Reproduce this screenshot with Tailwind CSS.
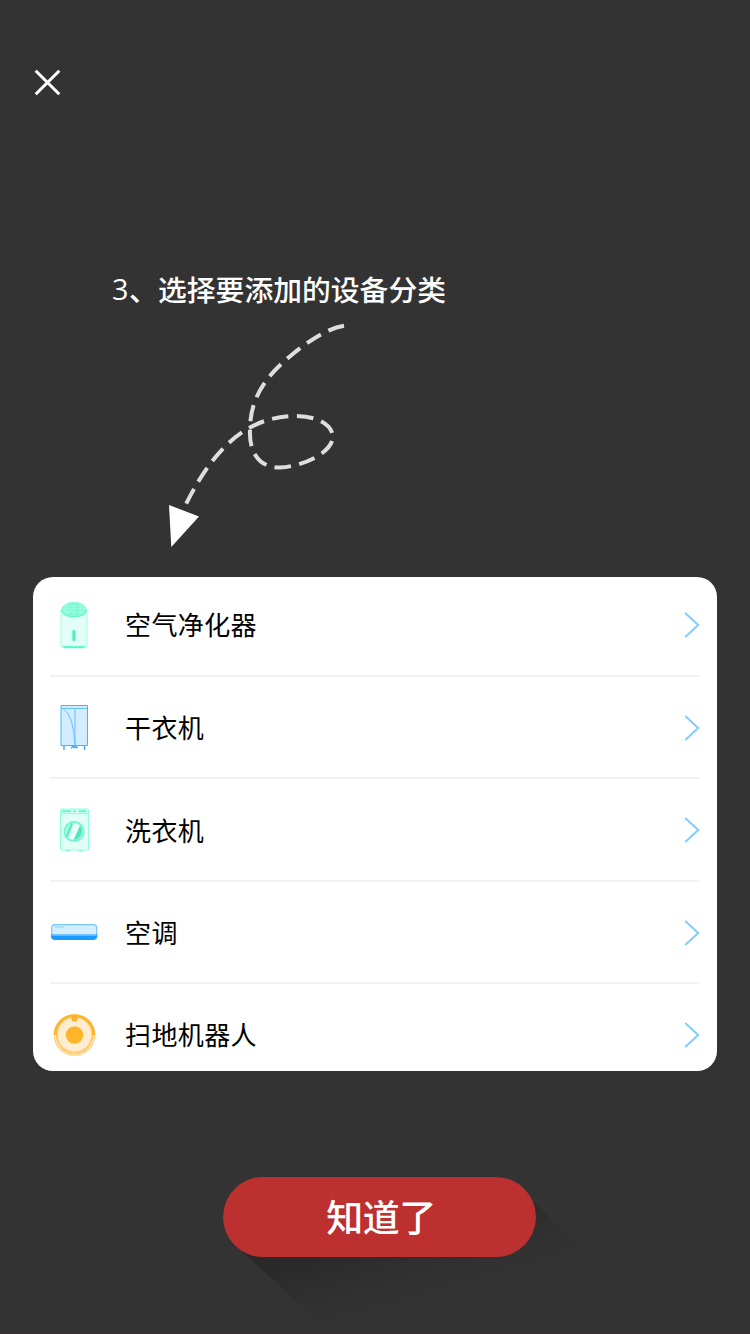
<!DOCTYPE html>
<html lang="zh-CN">
<head>
<meta charset="utf-8">
<title>添加设备</title>
<script src="https://cdn.jsdelivr.net/npm/@tailwindcss/browser@4"></script>
</head>
<body class="bg-[#333333]">
<main class="relative flex h-[1334px] w-[750px] flex-col overflow-hidden border-b border-[#3a3035] bg-[#333333] font-['Noto_Sans_CJK_SC',sans-serif]">
  <header class="pt-[68px] pl-[33px]">
    <svg class="block" width="30" height="30" viewBox="0 0 30 30" fill="none" stroke="#fff" stroke-width="3"><path d="M2.7 2.7 26.3 26.3M26.3 2.7 2.7 26.3"/></svg>
  </header>
  <h1 class="mt-[169px] mb-px flex h-[44px] items-center pl-[112px] text-[28.8px] leading-[44px] font-medium whitespace-nowrap text-white"><span class="w-[17px] font-['Open_Sans',sans-serif] font-medium">3</span><span class="w-[29px]">、</span><span>选择要添加的设备分类</span></h1>
  <svg class="ml-[150px] block shrink-0" width="210" height="265" viewBox="150 312 210 265" fill="none">
    <path d="M344 325.7C328 328 308 341 288 358C262 380 250 402 250 430C249 452 259 468 280 467.5C305 466 333 452 333 436C331 422 312 415 292 416C245 418 213 450 186 504" stroke="#dedede" stroke-width="4" stroke-dasharray="16.5 8.4"/>
    <path d="M169 505 199 516.5 171.3 547Z" fill="#fff"/>
  </svg>
  <section class="mx-[33px] h-[494px] shrink-0 overflow-hidden rounded-[20px] bg-white">
    <ul class="-mt-[2px] mr-[17px] ml-[17px] text-[26px] tracking-[0.4px] text-black">
      <li class="flex h-[102px] items-center border-b-2 border-[#f2f2f2]">
        <svg class="mr-[27px] block" width="48" height="48" viewBox="0 0 48 48"><path d="M11 9v36.5h26V9" fill="#e2fff7" stroke="#9effde"/><ellipse cx="24" cy="8.5" rx="12.5" ry="7.5" fill="#7cf9d3"/><path d="M13 5h22M11.5 8h25M12 11h24M24 1v15M19 1q-4 7 1 15M29 1q4 7-1 15M15 3q-2 6 2 11M33 3q2 6-2 11" fill="none" stroke="#b5ffe8" stroke-width=".6"/><path d="M11.5 9c0 9 25 9 25 0" fill="none" stroke="#5cf3c4"/><rect x="22.4" y="29" width="3" height="11" rx="1" fill="#4deebb"/><path d="M13.5 46.3h21" stroke="#4ffac6" stroke-width="2"/></svg>
        <span class="flex-1 pb-[3px]">空气净化器</span>
        <svg class="block" width="16" height="26" viewBox="0 0 16 26" fill="none" stroke="#82ccff" stroke-width="2"><path d="M1.2 1 14.2 13 1.2 25"/></svg>
      </li>
      <li class="flex h-[102px] items-center border-b-2 border-[#f2f2f2]">
        <svg class="mr-[27px] block" width="48" height="48" viewBox="0 0 48 48" fill="none"><path d="M11 2.500h26.500v40H11Z" fill="#d2edff" stroke="#49b2ff"/><path d="M11 5.500h26M25 6v37" stroke="#66bfff"/><path d="M13.5 6q10 6 11.500 37" stroke="#66bfff"/><path d="M14 43v4M34.500 43v4" stroke="#35a5ff" stroke-width="1.4"/><path d="M21 45.300l2-2 1.300 1.500 1.300-1.500 2 2" stroke="#35a5ff" stroke-width="1.4"/></svg>
        <span class="flex-1 pb-[2px]">干衣机</span>
        <svg class="mt-px block" width="16" height="26" viewBox="0 0 16 26" fill="none" stroke="#82ccff" stroke-width="2"><path d="M1.2 1 14.2 13 1.2 25"/></svg>
      </li>
      <li class="flex h-[103px] items-center border-b-2 border-[#f2f2f2]">
        <svg class="mr-[27px] mb-px block" width="48" height="48" viewBox="0 0 48 48" fill="none"><rect x="10.5" y="4" width="28" height="41" rx="1" fill="#e2fff7" stroke="#8cffdb"/><path d="M10 8.7h29" stroke="#8cffdb"/><path d="M12 6.3h9M28.5 6.3h8" stroke="#6af5c9" stroke-width="2"/><circle cx="24.5" cy="6.3" r="1.2" fill="#6af5c9"/><circle cx="24" cy="26.5" r="9.7" fill="#aaf9e2" stroke="#70f5cf" stroke-width="1.6"/><path d="M30 20.5a9 9 0 0 1-7 14.5Z" fill="#4de8bf"/><path d="M23.5 18.5 19 33.5 23.7 34.7 30 20.2Z" fill="#e9fff8"/><path d="M22 18.3 16.8 31.5" stroke="#5ceac4" stroke-width="2"/><path d="M16 45.8h4M29 45.8h4" stroke="#7bf5d0" stroke-width="1.3"/></svg>
        <span class="flex-1 pb-px">洗衣机</span>
        <svg class="mt-px block" width="16" height="26" viewBox="0 0 16 26" fill="none" stroke="#82ccff" stroke-width="2"><path d="M1.2 1 14.2 13 1.2 25"/></svg>
      </li>
      <li class="flex h-[102px] items-center border-b-2 border-[#f2f2f2]">
        <svg class="mr-[27px] block" width="48" height="48" viewBox="0 0 48 48" fill="none"><rect x="1.7" y="16.7" width="45" height="14" rx="3.5" fill="#d4efff" stroke="#75c6ff" stroke-width="1.2"/><path d="M5 19h9" stroke="#a5daff" stroke-width="1.5"/><path d="M1.2 26.5h46v1.5q0 4-4 4H5q-4 0-4-4Z" fill="#199bff"/><path d="M2 27.3h44.500" stroke="#65bdff" stroke-width="1.3"/></svg>
        <span class="flex-1 pb-[2px]">空调</span>
        <svg class="mt-[2px] block" width="16" height="26" viewBox="0 0 16 26" fill="none" stroke="#82ccff" stroke-width="2"><path d="M1.2 1 14.2 13 1.2 25"/></svg>
      </li>
      <li class="flex h-[102px] items-center">
        <svg class="mr-[27px] block" width="48" height="48" viewBox="0 0 48 48" fill="none"><circle cx="24.500" cy="24" r="20.2" fill="#fff0d9" stroke="#ffd184" stroke-width="1.3"/><path d="M5.500 24a19 19 0 0 1 38 0" stroke="#ffb52b" stroke-width="3.500"/><circle cx="24.500" cy="23.500" r="17" fill="#ffedd2" stroke="#ffd89b"/><path d="M6.500 24a18 18 0 0 0 36 0" stroke="#ffbf48" stroke-width="1.200"/><circle cx="24.500" cy="24" r="8.700" fill="#ffb52b"/><circle cx="24.500" cy="7.700" r="2.700" fill="#ffb52b" stroke="#f6a92b" stroke-width=".7"/></svg>
        <span class="flex-1 pb-[3px]">扫地机器人</span>
        <svg class="block" width="16" height="26" viewBox="0 0 16 26" fill="none" stroke="#82ccff" stroke-width="2"><path d="M1.2 1 14.2 13 1.2 25"/></svg>
      </li>
    </ul>
  </section>
  <div class="relative mt-[106px] ml-[223px] h-[80px] w-[313px] shrink-0">
    <svg class="absolute top-0 left-0" width="400" height="157" viewBox="0 0 400 157">
      <defs><linearGradient id="shade" gradientUnits="userSpaceOnUse" x1="160" y1="58" x2="182" y2="132"><stop offset="0" stop-color="#292929"/><stop offset=".5" stop-color="#2d2d2d" stop-opacity=".6"/><stop offset="1" stop-color="#303030" stop-opacity="0"/></linearGradient></defs>
      <path d="M18 73 108 157H400V110L307 22Z" fill="url(#shade)"/>
    </svg>
    <button class="relative flex h-[80px] w-[313px] items-center justify-center rounded-full bg-[#bc3030] pb-px pl-[3px] text-[37px] font-medium tracking-[-0.5px] text-white">知道了</button>
  </div>
</main>
</body>
</html>
